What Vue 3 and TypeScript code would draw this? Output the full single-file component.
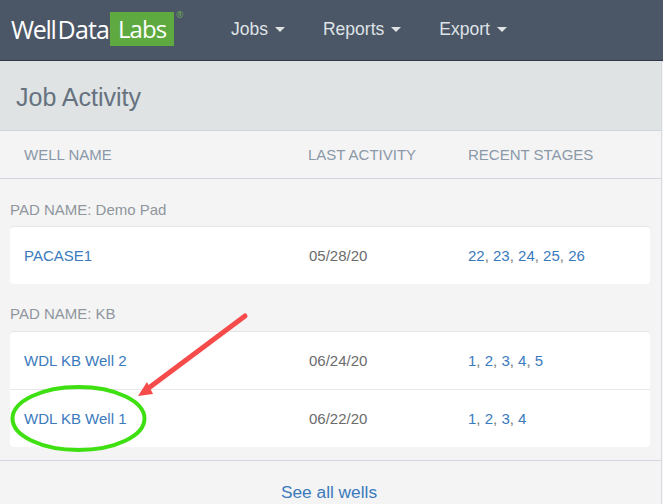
<script setup lang="ts">
interface Well { name: string; date: string; stages: number[] }
interface Pad { name: string; wells: Well[] }

const navItems = ['Jobs', 'Reports', 'Export']
const pads: Pad[] = [
  { name: 'Demo Pad', wells: [{ name: 'PACASE1', date: '05/28/20', stages: [22, 23, 24, 25, 26] }] },
  {
    name: 'KB',
    wells: [
      { name: 'WDL KB Well 2', date: '06/24/20', stages: [1, 2, 3, 4, 5] },
      { name: 'WDL KB Well 1', date: '06/22/20', stages: [1, 2, 3, 4] },
    ],
  },
]
</script>

<template>
  <div class="page">
    <nav class="nav">
      <div class="logo">
        <span class="logo-well">Well</span><span class="logo-data">Data</span>
        <span class="logo-labs">Labs</span>
        <span class="logo-reg">®</span>
      </div>
      <ul class="nav-list">
        <li v-for="item in navItems" :key="item" class="nav-item">
          {{ item }}<span class="caret"></span>
        </li>
      </ul>
    </nav>

    <div class="panel">
      <h1 class="title">Job Activity</h1>
      <div class="cols head">
        <span>WELL NAME</span>
        <span>LAST ACTIVITY</span>
        <span>RECENT STAGES</span>
      </div>
      <div class="body">
        <section v-for="pad in pads" :key="pad.name" class="pad">
          <div class="pad-name">PAD NAME: {{ pad.name }}</div>
          <div class="card">
            <div v-for="well in pad.wells" :key="well.name" class="cols row">
              <a class="link">{{ well.name }}</a>
              <span class="date">{{ well.date }}</span>
              <span class="stages">
                <template v-for="(s, i) in well.stages" :key="s">
                  <a class="link">{{ s }}</a><span v-if="i < well.stages.length - 1">, </span>
                </template>
              </span>
            </div>
          </div>
        </section>
      </div>
      <div class="foot"><a class="link">See all wells</a></div>
    </div>

    <svg class="markup" width="663" height="504" viewBox="0 0 663 504" aria-hidden="true">
      <ellipse cx="78.5" cy="418.5" rx="66" ry="31.5" fill="none" stroke="#3fe011" stroke-width="4" />
      <line x1="245" y1="316" x2="150" y2="387" stroke="#f54b4b" stroke-width="5" stroke-linecap="round" />
      <polygon points="138,396 147,382 153,394" fill="#f54b4b" />
    </svg>
  </div>
</template>

<style>
body { margin: 0; }
</style>

<style scoped>
.page {
  position: relative;
  width: 663px;
  height: 504px;
  overflow: hidden;
  background: #f4f4f4;
  font-family: "Liberation Sans", Arial, sans-serif;
  font-size: 15px;
  color: #6b6b6b;
}
.nav {
  display: flex;
  align-items: center;
  height: 60px;
  background: #4b5666;
  border-bottom: 1px solid #2f3844;
}
.logo {
  position: relative;
  display: flex;
  align-items: center;
  width: 231px;
  height: 34px;
  margin-top: -3px;
  padding-left: 11px;
  box-sizing: border-box;
  color: #fff;
  font-family: "Open Sans", sans-serif;
  font-size: 25px;
}
.logo-well { letter-spacing: -1.3px; margin-right: 2px; }
.logo-data { letter-spacing: -0.8px; margin-right: 1px; }
.logo-labs {
  width: 64px;
  height: 34px;
  line-height: 33px;
  background: #5fa941;
  text-align: center;
  font-size: 24px;
  letter-spacing: -0.9px;
  box-sizing: border-box;
}
.logo-reg {
  position: absolute;
  left: 176px;
  top: -4px;
  font-size: 9px;
  line-height: 14px;
  color: #6fae54;
}
.nav-list {
  display: flex;
  gap: 38px;
  margin: -2px 0 0;
  padding: 0;
  list-style: none;
}
.nav-item {
  color: #dfe3e6;
  font-size: 17.5px;
}
.caret {
  display: inline-block;
  margin-left: 7px;
  vertical-align: 3px;
  border-top: 5px solid #dfe3e6;
  border-left: 5px solid transparent;
  border-right: 5px solid transparent;
}
.panel {
  height: 443px;
  margin-right: 1px;
  border-right: 1px solid #d8dbe2;
  box-sizing: border-box;
}
.title {
  margin: 0;
  height: 70px;
  padding-left: 16px;
  line-height: 73px;
  box-sizing: border-box;
  background: #dfe3e4;
  border-bottom: 1px solid #cfd5de;
  color: #66727f;
  font-size: 25px;
  font-weight: 400;
}
.cols {
  display: grid;
  grid-template-columns: 284px 160px 1fr;
  align-items: center;
}
.head {
  height: 48px;
  padding-left: 24px;
  border-bottom: 1px solid #d3d7e2;
  box-sizing: border-box;
  color: #8a98a8;
}
.body {
  height: 282px;
  padding: 0 11px 0 10px;
  box-sizing: border-box;
  border-bottom: 1px solid #d3d7e2;
}
.pad-name {
  height: 47px;
  padding-top: 22px;
  box-sizing: border-box;
  color: #8f969d;
}
.pad + .pad .pad-name { padding-top: 21px; }
.card {
  background: #fff;
  border-top: 1px solid #e6e6e6;
  border-radius: 4px;
}
.row {
  height: 57px;
  padding-left: 14px;
  grid-template-columns: 285px 159px 1fr;
  box-sizing: border-box;
}
.row + .row {
  height: 58px;
  border-top: 1px solid #e8e8e8;
}
.date { color: #6b6b6b; }
.stages { color: #777; }
.link { color: #3a7abd; }
.foot {
  padding: 21px 3px 0 0;
  text-align: center;
  font-size: 17.3px;
  line-height: 20px;
}
.markup {
  position: absolute;
  left: 0;
  top: 0;
  pointer-events: none;
}
</style>
